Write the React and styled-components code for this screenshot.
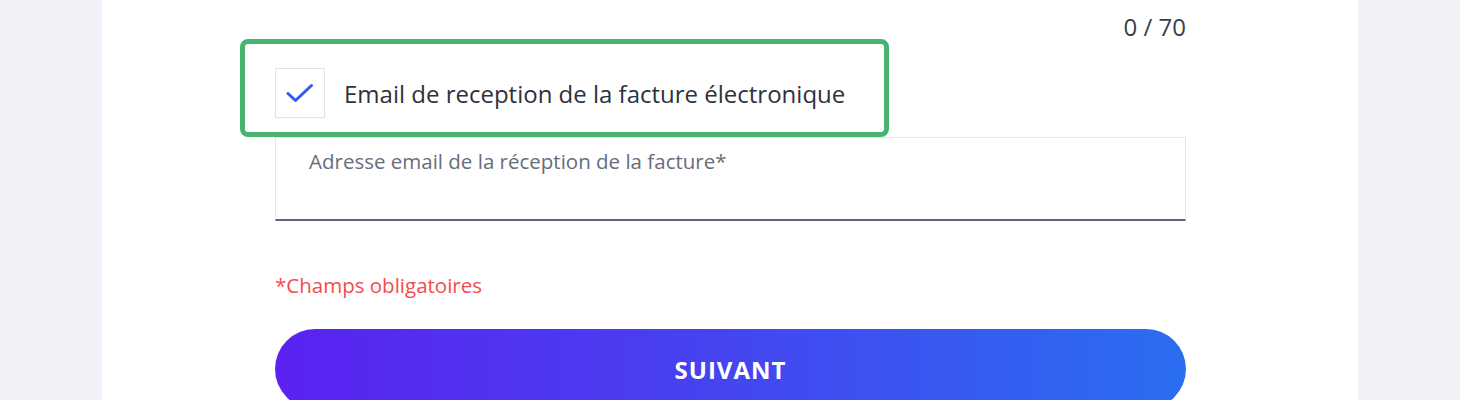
import React, { useState } from 'react';
import styled, { createGlobalStyle } from 'styled-components';

const GlobalStyle = createGlobalStyle`
    html, body {
        margin: 0;
        padding: 0;
        background: #f0f2f7;
        font-family: "Open Sans", "Noto Sans", sans-serif;
    }
`;

const Page = styled.div`
    display: flex;
    justify-content: center;
    align-items: flex-start;
    height: 400px;
    overflow: hidden;
`;

const Card = styled.div`
    width: 1256px;
    min-height: 440px;
    background: #ffffff;
    display: flex;
    justify-content: center;
    align-items: flex-start;
`;

const Form = styled.div`
    width: 911px;
    margin-left: 1px;
    display: flex;
    flex-direction: column;

    & > * {
        flex-shrink: 0;
    }
`;

const Counter = styled.div`
    align-self: flex-end;
    margin-top: 10px;
    font-size: 24px;
    line-height: 34px;
    color: #3a3f4a;
`;

const CheckRow = styled.label`
    position: relative;
    display: flex;
    align-items: center;
    gap: 19px;
    margin-top: 24px;
    height: 50px;
    cursor: pointer;
    user-select: none;
`;

const Highlight = styled.span`
    position: absolute;
    left: -35px;
    top: -29px;
    width: 649px;
    height: 98px;
    box-sizing: border-box;
    border: 5px solid #48b271;
    border-radius: 8px;
    pointer-events: none;
`;

const Box = styled.span`
    display: flex;
    align-items: center;
    justify-content: center;
    width: 50px;
    height: 50px;
    box-sizing: border-box;
    border: 1px solid #dfe3ea;
    background: #ffffff;
`;

const Label = styled.span`
    font-size: 24px;
    color: #2d323c;
`;

const Field = styled.div`
    margin-top: 19px;
    height: 84px;
    box-sizing: border-box;
    border: 1px solid #e3e6eb;
    border-bottom: 2px solid #5b6480;
    padding: 9px 33px;
`;

const Placeholder = styled.div`
    font-size: 20.5px;
    line-height: 28px;
    color: #676d7a;
`;

const Required = styled.div`
    margin-top: 50px;
    font-size: 20.5px;
    line-height: 28px;
    color: #f24c4c;
`;

const Button = styled.button`
    margin-top: 30px;
    height: 80px;
    border: none;
    border-radius: 40px;
    background: linear-gradient(90deg, #5a22f0 0%, #4a3df0 40%, #2a6ef0 100%);
    color: #ffffff;
    font-family: "Open Sans", "Noto Sans", sans-serif;
    font-weight: 700;
    font-size: 24px;
    letter-spacing: 1px;
    cursor: pointer;
`;

const CheckIcon = () => (
    <svg width="28" height="20" viewBox="0 0 28 20" fill="none">
        <path d="M2 10.5 L9.5 17.5 L25.5 2.5" stroke="#3558f0" strokeWidth="3" strokeLinecap="round" strokeLinejoin="round" />
    </svg>
);

const App = () => {
    const [checked, setChecked] = useState(true);

    return (
        <Page>
            <GlobalStyle />
            <Card>
                <Form>
                    <Counter>0 / 70</Counter>
                    <CheckRow onClick={() => setChecked(!checked)}>
                        <Highlight />
                        <Box>{checked && <CheckIcon />}</Box>
                        <Label>Email de reception de la facture électronique</Label>
                    </CheckRow>
                    <Field>
                        <Placeholder>Adresse email de la réception de la facture*</Placeholder>
                    </Field>
                    <Required>*Champs obligatoires</Required>
                    <Button>SUIVANT</Button>
                </Form>
            </Card>
        </Page>
    );
};

export default App;
